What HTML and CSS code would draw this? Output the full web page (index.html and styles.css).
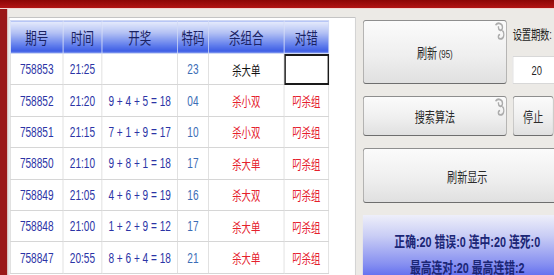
FILE: index.html
```html
<!DOCTYPE html>
<html lang="zh-CN">
<head>
    <meta charset="UTF-8">
    <meta name="viewport" content="width=device-width, initial-scale=1.0">
    <title>杀组合</title>
    <link rel="stylesheet" href="styles.css">
</head>
<body>
    <div class="frame">
        <div class="titlebar"></div>

        <div class="main">
            <!-- 左边：开奖数据表 -->
            <div class="grid-panel">
                <table class="grid">
                    <tr class="head">
                        <th class="c-no">期号</th>
                        <th class="c-time">时间</th>
                        <th class="c-draw">开奖</th>
                        <th class="c-code">特码</th>
                        <th class="c-kill">杀组合</th>
                        <th class="c-ok">对错</th>
                    </tr>
                    <tr>
                        <td class="blue">758853</td>
                        <td class="blue">21:25</td>
                        <td class="blue"></td>
                        <td class="steel">23</td>
                        <td class="black">杀大单</td>
                        <td class="selected"></td>
                    </tr>
                    <tr>
                        <td class="blue">758852</td>
                        <td class="blue">21:20</td>
                        <td class="blue">9 + 4 + 5 = 18</td>
                        <td class="steel">04</td>
                        <td class="red">杀小双</td>
                        <td class="red">叼杀组</td>
                    </tr>
                    <tr>
                        <td class="blue">758851</td>
                        <td class="blue">21:15</td>
                        <td class="blue">7 + 1 + 9 = 17</td>
                        <td class="steel">10</td>
                        <td class="red">杀小双</td>
                        <td class="red">叼杀组</td>
                    </tr>
                    <tr>
                        <td class="blue">758850</td>
                        <td class="blue">21:10</td>
                        <td class="blue">9 + 8 + 1 = 18</td>
                        <td class="steel">17</td>
                        <td class="red">杀大单</td>
                        <td class="red">叼杀组</td>
                    </tr>
                    <tr>
                        <td class="blue">758849</td>
                        <td class="blue">21:05</td>
                        <td class="blue">4 + 6 + 9 = 19</td>
                        <td class="steel">16</td>
                        <td class="red">杀大双</td>
                        <td class="red">叼杀组</td>
                    </tr>
                    <tr>
                        <td class="blue">758848</td>
                        <td class="blue">21:00</td>
                        <td class="blue">1 + 2 + 9 = 12</td>
                        <td class="steel">17</td>
                        <td class="red">杀大单</td>
                        <td class="red">叼杀组</td>
                    </tr>
                    <tr>
                        <td class="blue">758847</td>
                        <td class="blue">20:55</td>
                        <td class="blue">8 + 6 + 4 = 18</td>
                        <td class="steel">21</td>
                        <td class="red">杀大单</td>
                        <td class="red">叼杀组</td>
                    </tr>
                </table>
            </div>

            <!-- 右边：按钮和统计 -->
            <div class="side">
                <button class="btn btn-big">刷新<small>(95)</small>
                    <svg class="curl" viewBox="0 0 14 18"><path d="M2 3 C5 0 12 1 11 6 C10 9 5 8 6 4"/><path d="M11 8 C14 10 14 16 8 16 C5 16 5 12 8 12"/></svg>
                </button>
                <div class="setting">
                    <div class="setting-label">设置期数:</div>
                    <div class="setting-input">20</div>
                </div>

                <button class="btn">搜索算法
                    <svg class="curl" viewBox="0 0 14 18"><path d="M2 3 C5 0 12 1 11 6 C10 9 5 8 6 4"/><path d="M11 8 C14 10 14 16 8 16 C5 16 5 12 8 12"/></svg>
                </button>
                <button class="btn btn-stop">停止</button>

                <button class="btn btn-wide">刷新显示</button>

                <div class="stats">
                    <p>正确:20 错误:0 连中:20 连死:0</p>
                    <p>最高连对:20 最高连错:2</p>
                </div>
            </div>
        </div>
    </div>
</body>
</html>
```

FILE: styles.css
```css
html, body {
    margin: 0;
    padding: 0;
    overflow: hidden;
    background-color: #eceae6;
}

/* 截图是横向压缩过的，整体按比例缩放 */
.frame {
    width: 800px;
    height: 275px;
    overflow: hidden;
    transform: scaleX(0.72);
    transform-origin: 0 0;
    background-color: #eceae6;
    font-family: 'Liberation Sans', 'Noto Sans CJK SC', sans-serif;
}

.titlebar {
    height: 8px;
    background: linear-gradient(#8c0606, #b31414);
    border-bottom: 1px solid #f3d6d3;
}

.main {
    display: flex;
    align-items: flex-start;
    height: 266px;
    border-left: 10px solid #9a1818;
    padding-top: 8px;
    box-sizing: border-box;
}

.grid-panel {
    width: 482px;
    height: 270px;
    margin-left: 2px;
    padding: 2px 0 0 1px;
    box-sizing: border-box;
    background-color: #ffffff;
    border: 1px solid #c4c4c4;
}

.grid {
    border-collapse: collapse;
    table-layout: fixed;
    width: 436px;
}

.grid th, .grid td {
    border: 1px solid #d6d6d6;
    text-align: center;
    padding: 0;
    white-space: nowrap;
}

.grid tr {
    height: 31.4px;
}

.grid tr.head {
    height: 33px;
}

.grid th {
    font-size: 16px;
    font-weight: normal;
    color: #1a2262;
    background: linear-gradient(#e6ebfc 0%, #b4c2f4 35%, #5f7cec 75%, #3c5ce4 94%, #a8bcf6 100%);
    border-color: #cfd8f4;
}

.c-no { width: 72px; }
.c-time { width: 53px; }
.c-draw { width: 104px; }
.c-code { width: 42px; }
.c-kill { width: 104px; }
.c-ok { width: 61px; }

.grid td {
    font-size: 14px;
}

.blue { color: #2b34a6; }
.steel { color: #3b6db6; }
.black { color: #111111; }
.red { color: #e5202c; }

.grid td.black, .grid td.red {
    font-size: 13px;
}

.selected {
    outline: 2px solid #1a1a1a;
    outline-offset: -2px;
}

/* 右侧 */
.side {
    display: grid;
    grid-template-columns: 200px 82px;
    grid-template-rows: 64px 40px 55px 70px;
    column-gap: 8px;
    row-gap: 12px;
    margin-left: 10px;
    margin-top: 3px;
}

.btn {
    position: relative;
    font-family: 'Liberation Sans', 'Noto Sans CJK SC', sans-serif;
    font-size: 14px;
    color: #2a2a2a;
    background: linear-gradient(#fbfbfb, #efefef 55%, #e0e0e0);
    border: 1px solid #8e8e8e;
    border-bottom-color: #6e6e6e;
    border-radius: 4px;
    padding: 0;
    cursor: pointer;
}

.btn small {
    font-size: 11px;
    margin-left: 2px;
}

.btn-stop {
    width: 57px;
}

.btn-wide {
    grid-column: 1 / 3;
}

.curl {
    position: absolute;
    top: 1px;
    right: 2px;
    width: 15px;
    height: 19px;
    fill: none;
    stroke: #acacac;
    stroke-width: 1.8;
}

.setting {
    display: flex;
    flex-direction: column;
}

.setting-label {
    height: 36px;
    line-height: 30px;
    font-size: 13px;
    letter-spacing: -0.3px;
    color: #222222;
    white-space: nowrap;
}

.setting-input {
    width: 67px;
    height: 28px;
    line-height: 28px;
    box-sizing: border-box;
    background-color: #ffffff;
    border: 1px solid #d8d8d8;
    text-align: center;
    font-size: 13px;
    color: #222222;
}

.stats {
    grid-column: 1 / 3;
    width: 290px;
    background: linear-gradient(#eeeffa, #c9cdf5 30%, #8790f1 70%, #4858ee);
    text-align: center;
    color: #1b2676;
    font-size: 15px;
    font-weight: bold;
}

.stats p {
    margin: 0;
    line-height: 26px;
}

.stats p:first-child {
    margin-top: 14px;
}
```
